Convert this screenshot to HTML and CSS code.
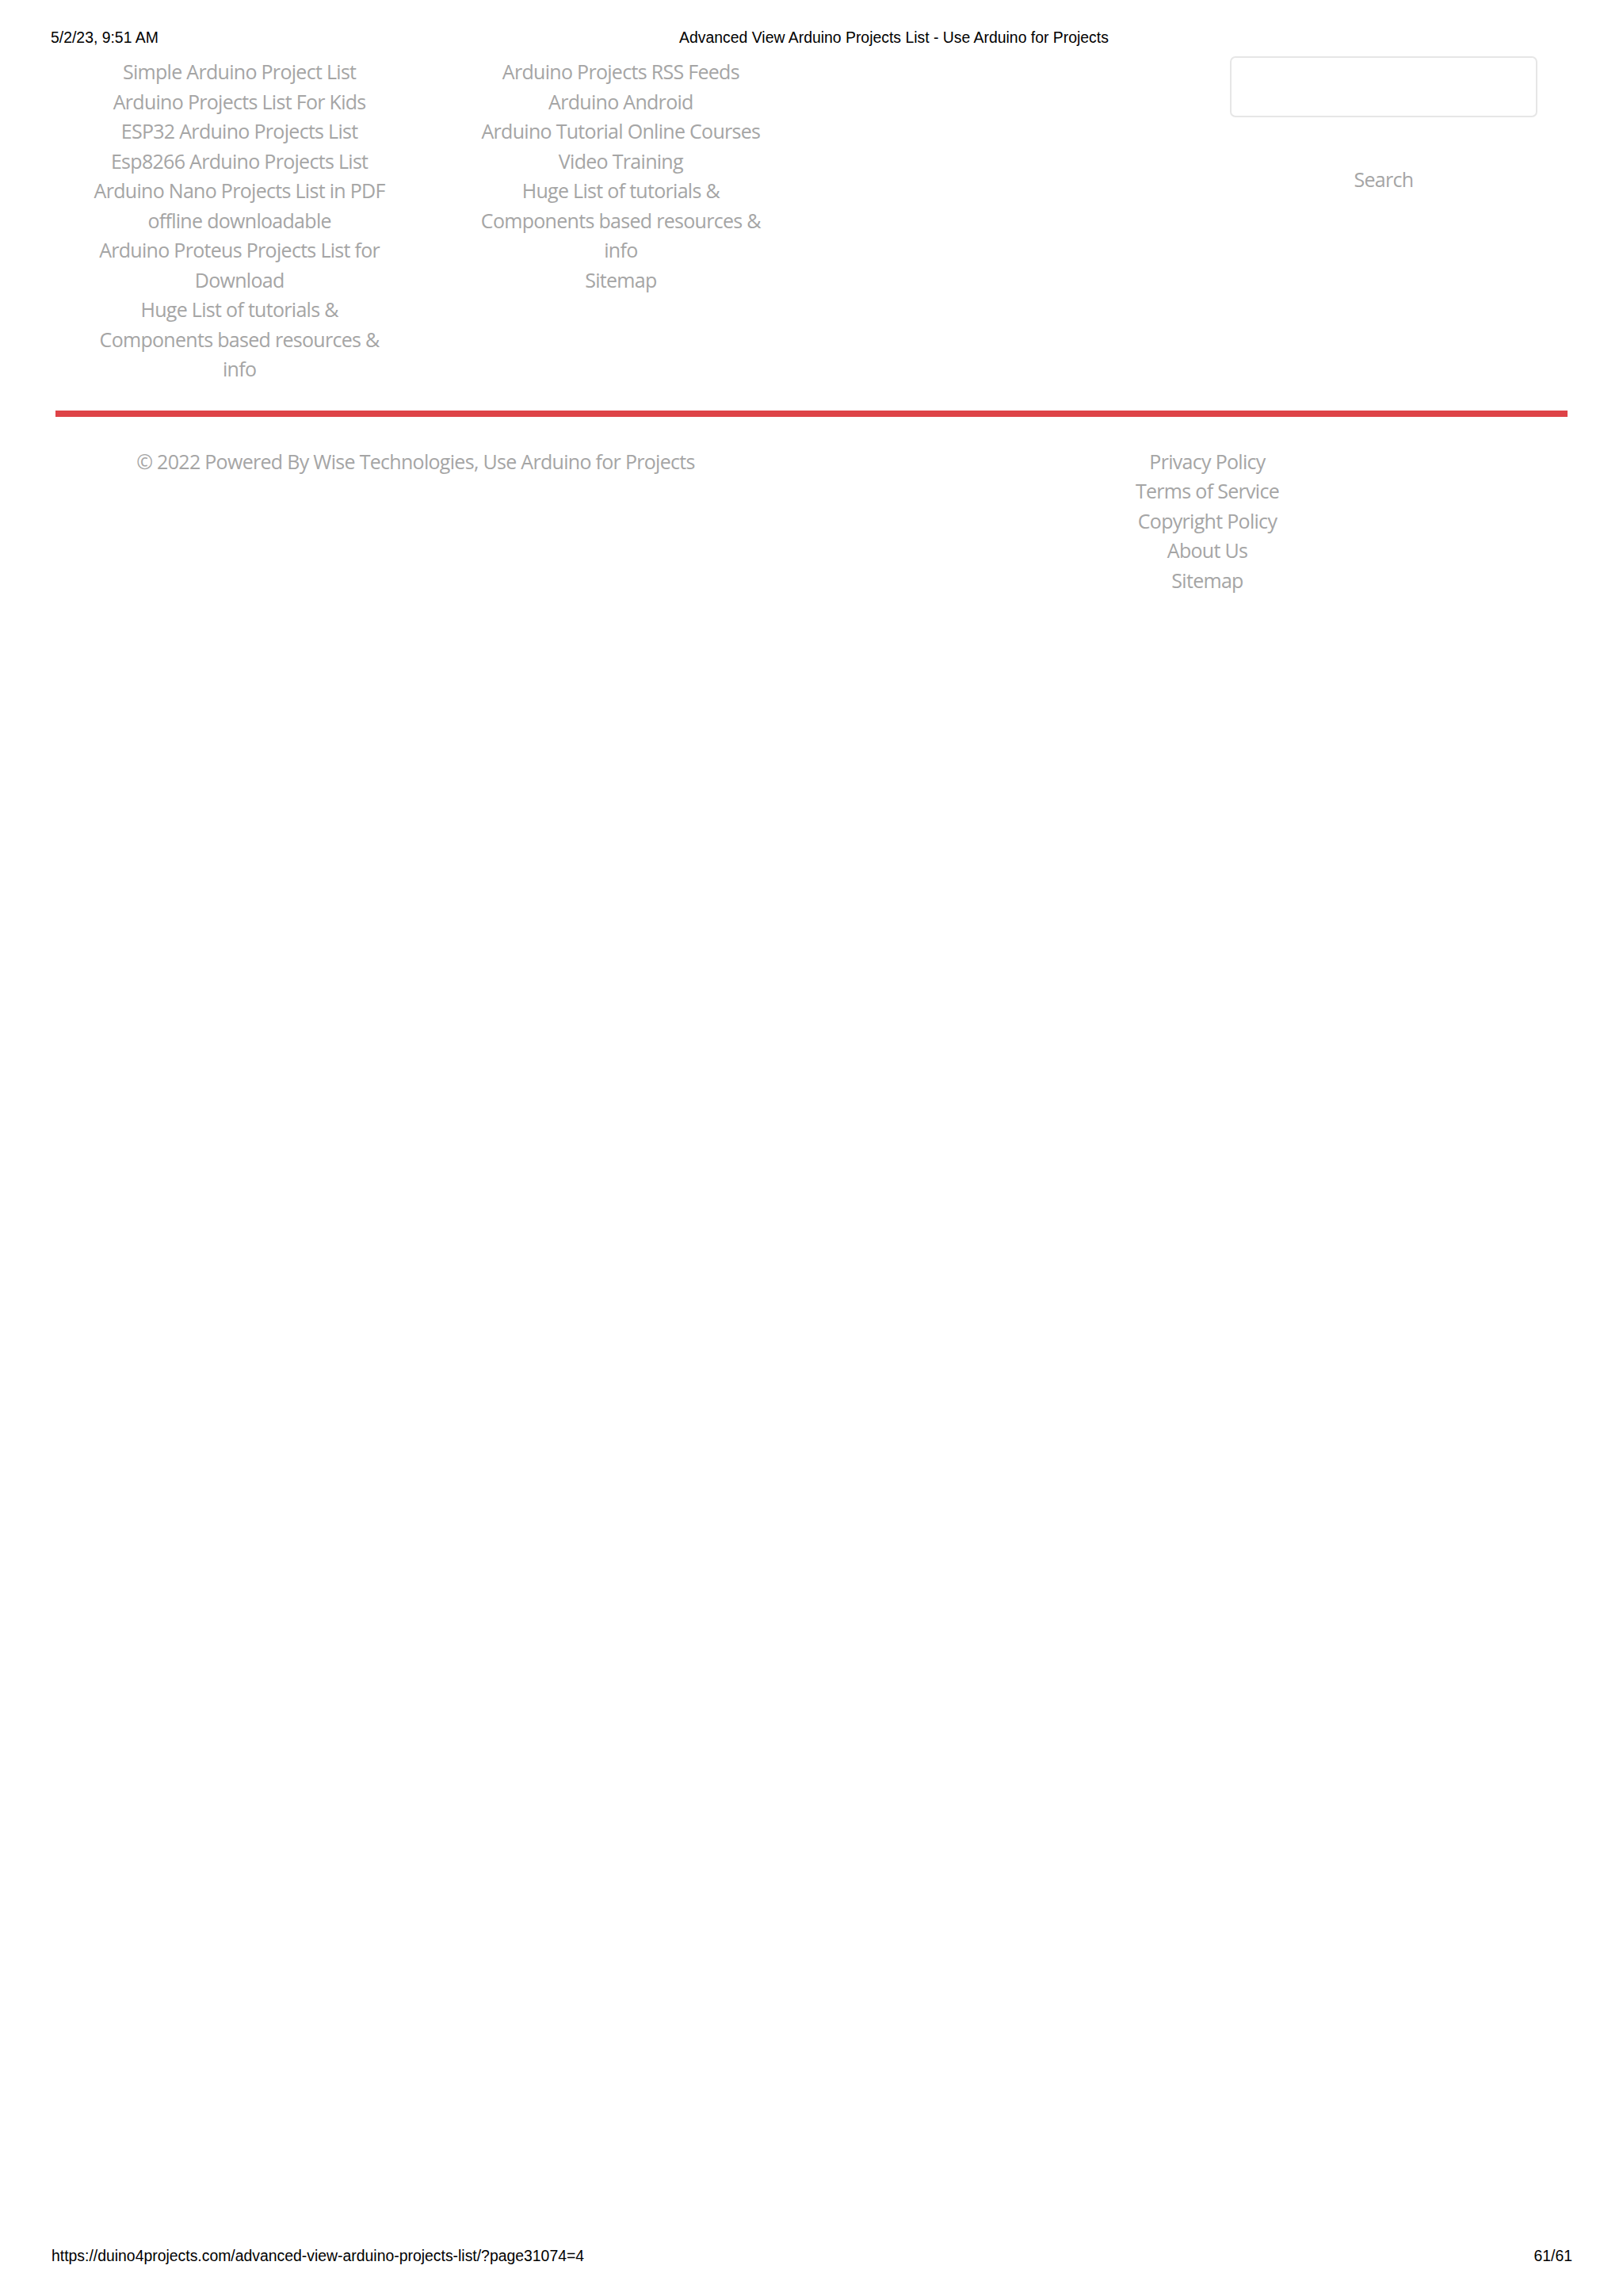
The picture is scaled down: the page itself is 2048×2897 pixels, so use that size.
FILE: index.html
```html
<!DOCTYPE html>
<html lang="en">
<head>
<meta charset="utf-8">
<title>Advanced View Arduino Projects List - Use Arduino for Projects</title>
<link rel="stylesheet" href="styles.css">
</head>
<body>
<div class="page">
  <header class="print-head">
    <span class="print-date">5/2/23, 9:51 AM</span>
    <span class="print-title">Advanced View Arduino Projects List - Use Arduino for Projects</span>
  </header>

  <main class="site-footer">
    <section class="widgets">
      <div class="widget">
        <ul class="link-list">
          <li><a href="#">Simple Arduino Project List</a></li>
          <li><a href="#">Arduino Projects List For Kids</a></li>
          <li><a href="#">ESP32 Arduino Projects List</a></li>
          <li><a href="#">Esp8266 Arduino Projects List</a></li>
          <li><a href="#">Arduino Nano Projects List in PDF offline downloadable</a></li>
          <li><a href="#">Arduino Proteus Projects List for Download</a></li>
          <li><a href="#">Huge List of tutorials &amp; Components based resources &amp; info</a></li>
        </ul>
      </div>
      <div class="widget">
        <ul class="link-list">
          <li><a href="#">Arduino Projects RSS Feeds</a></li>
          <li><a href="#">Arduino Android</a></li>
          <li><a href="#">Arduino Tutorial Online Courses</a></li>
          <li><a href="#">Video Training</a></li>
          <li><a href="#">Huge List of tutorials &amp; Components based resources &amp; info</a></li>
          <li><a href="#">Sitemap</a></li>
        </ul>
      </div>
      <div class="widget"></div>
      <div class="widget">
        <form class="search-form">
          <input class="search-input" type="text" aria-label="Search">
          <button class="search-button" type="button">Search</button>
        </form>
      </div>
    </section>

    <hr class="divider">

    <section class="bottom-bar">
      <div class="copyright">© 2022 Powered By Wise Technologies, Use Arduino for Projects</div>
      <ul class="legal-links">
        <li><a href="#">Privacy Policy</a></li>
        <li><a href="#">Terms of Service</a></li>
        <li><a href="#">Copyright Policy</a></li>
        <li><a href="#">About Us</a></li>
        <li><a href="#">Sitemap</a></li>
      </ul>
    </section>
  </main>

  <footer class="print-foot">
    <span class="print-url">https://duino4projects.com/advanced-view-arduino-projects-list/?page31074=4</span>
    <span class="print-page">61/61</span>
  </footer>
</div>
</body>
</html>
```
FILE: styles.css
```css
html, body {
  margin: 0;
  padding: 0;
  background: #ffffff;
}

.page {
  height: 2897px;
  display: flex;
  flex-direction: column;
}

.print-head {
  display: flex;
  align-items: center;
  padding: 36px 48px 0 64px;
  font-family: "Liberation Sans", Arial, sans-serif;
  font-size: 19.4px;
  line-height: 23px;
  color: #000;
}

.print-date {
  width: 192px;
}

.print-title {
  flex: 1;
  text-align: center;
}

.site-footer {
  flex: 1;
  font-family: "Open Sans", "Noto Sans", sans-serif;
  font-size: 25px;
  line-height: 37.5px;
  letter-spacing: -0.7px;
  color: #a5a5a5;
}

.site-footer a {
  color: #a5a5a5;
  text-decoration: none;
}

.widgets {
  display: grid;
  grid-template-columns: repeat(4, 1fr);
  width: 1925px;
  margin: 12px auto 0;
}

.widget {
  padding: 0 46.6px;
  text-align: center;
}

.link-list {
  list-style: none;
  margin: 1px 0 0;
  padding: 0;
}

.search-form {
  display: flex;
  flex-direction: column;
  align-items: center;
}

.search-input {
  box-sizing: border-box;
  width: 100%;
  height: 77px;
  border: 2px solid #e6e6e6;
  border-radius: 7px;
  background: #fff;
  margin: 0;
}

.search-button {
  margin-top: 60px;
  padding: 0;
  border: 0;
  background: transparent;
  font: inherit;
  letter-spacing: inherit;
  color: #a5a5a5;
  line-height: 37.5px;
}

.divider {
  width: 1908px;
  height: 8px;
  margin: 33px auto 0;
  border: 0;
  background: #de4347;
}

.bottom-bar {
  display: grid;
  grid-template-columns: 1fr 1fr;
  padding: 38px 25px 0;
  text-align: center;
}

.legal-links {
  list-style: none;
  margin: 0;
  padding: 0;
}

.print-foot {
  display: flex;
  justify-content: space-between;
  align-items: center;
  padding: 0 64px 39px 65px;
  font-family: "Liberation Sans", Arial, sans-serif;
  font-size: 19.4px;
  line-height: 23px;
  color: #000;
}
```
